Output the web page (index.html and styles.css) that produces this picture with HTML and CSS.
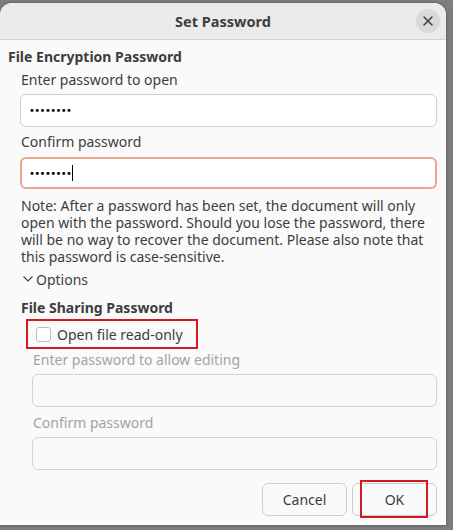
FILE: index.html
```html
<!DOCTYPE html>
<html>
<head>
<meta charset="utf-8">
<link rel="stylesheet" href="styles.css">
</head>
<body>
<div class="dialog">
  <div class="header">
    <span class="spacer"></span>
    <span class="title">Set Password</span>
    <span class="close">
      <svg width="12" height="12" viewBox="0 0 12 12"><path d="M2 2 L10 10 M10 2 L2 10" stroke="#3d3d3d" stroke-width="1.5" stroke-linecap="round"/></svg>
    </span>
  </div>
  <div class="content">
    <div class="heading">File Encryption Password</div>
    <div class="section">
      <div class="label l1">Enter password to open</div>
      <div class="field"><span class="dots">••••••••</span></div>
      <div class="label l2">Confirm password</div>
      <div class="field focus"><span class="dots">••••••••</span><span class="caret"></span></div>
      <p class="note">Note: After a password has been set, the document will only open with the password. Should you lose the password, there will be no way to recover the document. Please also note that this password is case-sensitive.</p>
      <div class="options">
        <svg class="chev" width="10" height="6" viewBox="0 0 10 6"><path d="M0.5 0.5 L5 5 L9.5 0.5" fill="none" stroke="#3d3d3d" stroke-width="1.1"/></svg>
        <span>Options</span>
      </div>
      <div class="heading h2">File Sharing Password</div>
      <div class="checkrow">
        <span class="box"></span>
        <span>Open file read-only</span>
      </div>
      <div class="disabled">
        <div class="label dl1">Enter password to allow editing</div>
        <div class="field"></div>
        <div class="label dl2">Confirm password</div>
        <div class="field"></div>
      </div>
      <div class="buttons">
        <div class="btn">Cancel</div>
        <div class="btn ok">OK<span class="mark"></span></div>
      </div>
    </div>
  </div>
</div>
</body>
</html>
```
FILE: styles.css
```css
html, body {
  margin: 0;
  padding: 0;
}
body {
  width: 453px;
  height: 530px;
  overflow: hidden;
  background: #7e7e7e;
  font-family: "Noto Sans", "DejaVu Sans", sans-serif;
  font-size: 14px;
  color: #3d3d3d;
}
.dialog {
  width: 446px;
  height: 522px;
  margin-top: 3px;
  background: #fafafa;
  border-radius: 12px 12px 0 0;
  box-shadow: 0 0 3px 1px rgba(0,0,0,0.2);
  overflow: hidden;
}
.header {
  height: 36px;
  background: #ebebeb;
  border-bottom: 1px solid #d4d4d4;
  display: grid;
  grid-template-columns: 40px 1fr 40px;
  align-items: center;
}
.title {
  text-align: center;
  font-weight: 700;
  font-size: 14.5px;
  color: #3d3d3d;
}
.close {
  width: 24px;
  height: 24px;
  border-radius: 50%;
  background: #dadada;
  display: flex;
  align-items: center;
  justify-content: center;
  justify-self: start;
  margin-left: 10px;
}
.content {
  padding: 8px 9px 0 8px;
}
.heading {
  font-weight: 700;
  line-height: 18px;
  height: 18px;
}
.section {
  padding-left: 12px;
}
.label {
  line-height: 18px;
  height: 18px;
  padding-left: 1px;
}
.l1 { margin-top: 5px; margin-bottom: 5px; }
.l2 { margin-top: 6px; margin-bottom: 6px; }
.field {
  box-sizing: border-box;
  height: 33px;
  background: #ffffff;
  border: 1px solid #cfcfcf;
  border-radius: 6px;
  display: flex;
  align-items: center;
  padding-left: 8px;
}
.field.focus {
  border: 2px solid #efa48c;
  padding-left: 7px;
  height: 32px;
}
.dots {
  color: #000;
  font-size: 10px;
  letter-spacing: -0.6px;
  font-family: "DejaVu Sans", sans-serif;
}
.caret {
  width: 1px;
  height: 16px;
  background: #000;
  margin-left: 1px;
}
.note {
  margin: 8px 0 0 0;
  padding-left: 1px;
  line-height: 17px;
  font-size: 14px;
}
.options {
  margin-top: 5px;
  height: 18px;
  display: flex;
  align-items: center;
  padding-left: 3px;
}
.chev {
  margin-right: 3px;
}
.h2 {
  margin-top: 11px;
  padding-left: 1px;
}
.checkrow {
  box-sizing: border-box;
  margin-top: 2px;
  margin-left: 6px;
  width: 172px;
  height: 30px;
  border: 2px solid #d21a1f;
  display: flex;
  align-items: center;
  padding-left: 8px;
}
.box {
  box-sizing: border-box;
  width: 15px;
  height: 15px;
  border: 1px solid #bdbdbd;
  border-radius: 3px;
  background: #fff;
  margin-right: 6px;
}
.disabled {
  padding-left: 12px;
  color: #a3a3a3;
}
.disabled .field {
  background: #fafafa;
  border-color: #d2d2d2;
}
.dl1 { margin-top: 2px; margin-bottom: 5px; }
.dl2 { margin-top: 7px; margin-bottom: 5px; }
.buttons {
  margin-top: 13px;
  display: flex;
  justify-content: flex-end;
  gap: 5px;
}
.btn {
  box-sizing: border-box;
  width: 85px;
  height: 33px;
  border: 1px solid #cdcdcd;
  border-radius: 6px;
  background: #fafafa;
  display: flex;
  align-items: center;
  justify-content: center;
  position: relative;
}
.mark {
  position: absolute;
  left: 7px;
  top: -4px;
  width: 68px;
  height: 38px;
  box-sizing: border-box;
  border: 2px solid #d21a1f;
}
```
